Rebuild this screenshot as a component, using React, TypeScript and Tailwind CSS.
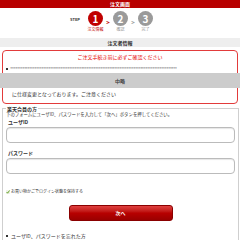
const font = { fontFamily: '"Noto Sans CJK JP", "Noto Sans", sans-serif' };

function Step({ n, label, active }: { n: number; label: string; active?: boolean }) {
  return (
    <div className="flex w-[15px] flex-col items-center">
      <div
        className={`flex h-[15px] w-[15px] items-center justify-center rounded-full text-[10px] font-bold leading-none text-white ${
          active ? "bg-[#c00000]" : "bg-[#9a9a9a]"
        }`}
      >
        {n}
      </div>
      <span
        className={`mt-[1px] whitespace-nowrap text-[4px] leading-[5px] ${
          active ? "text-[#c00000]" : "text-[#999]"
        }`}
      >
        {label}
      </span>
    </div>
  );
}

function Arrow({ active }: { active?: boolean }) {
  return (
    <div
      className={`flex h-[15px] w-[10px] items-end justify-center text-[6px] font-bold leading-none ${
        active ? "text-[#c00000]" : "text-[#999]"
      }`}
    >
      &gt;
    </div>
  );
}

export default function App() {
  return (
    <div className="h-[240px] w-[240px] overflow-hidden bg-white text-[#333]" style={font}>
      <div className="h-[8px] bg-[#b80000] text-center text-[5px] font-bold leading-[8px] text-white">
        注文画面
      </div>

      <div className="flex h-[30px] items-start pl-[70px] pt-[3px]">
        <div className="w-[18px] pt-[6px] text-[4px] font-bold leading-none">STEP</div>
        <Step n={1} label="注文情報" active />
        <Arrow active />
        <Step n={2} label="確認" />
        <Arrow />
        <Step n={3} label="完了" />
      </div>

      <div className="h-[9px] bg-[#eeeeee] text-center text-[5px] font-bold leading-[9px]">
        注文者情報
      </div>

      <div className="mx-[2px] mt-[3px] h-[54px] rounded-[4px] border border-[#e23b3b]">
        <div className="pt-[3px] text-center text-[5px] leading-[6px] text-[#e60000]">
          ご注文手続き前に必ずご確認ください
        </div>
        <div className="mt-[6px] flex items-center gap-[2px] overflow-hidden pl-[3px] pr-[6px] text-[5px] leading-[6px]">
          <span className="h-[2px] w-[2px] shrink-0 bg-[#333]" />
          <span className="whitespace-nowrap tracking-[-0.6px] text-[#888]">
            ************************************************************************************************
          </span>
        </div>
        <div className="-mx-[3px] mt-[1px] h-[15px] bg-[#cccccc] text-center text-[5px] font-bold leading-[15px] text-[#444]">
          中略
        </div>
        <div className="pt-[3px] pl-[9px] text-[5px] leading-[6px]">
          に仕様変更となっております。ご注意ください
        </div>
      </div>

      <fieldset className="mx-[2px] mt-[2px] h-[200px] border border-[#cfcfcf] px-[3px] pt-0">
        <legend className="px-[1px] text-[5px] font-bold leading-[5px]">楽天会員の方</legend>
        <p className="text-[4.4px] leading-[6px]">
          下のフォームにユーザID、パスワードを入力して「次へ」ボタンを押してください。
        </p>
        <div className="mt-[2px] pl-[2px] text-[5px] font-bold leading-[6px]">ユーザID</div>
        <div className="mt-[2px] h-[16px] w-[229px] rounded-[4px] border border-[#bbb] shadow-[inset_0_1px_1px_rgba(0,0,0,0.1)]" />
        <div className="mt-[7px] pl-[2px] text-[5px] font-bold leading-[6px]">パスワード</div>
        <div className="mt-[2px] h-[16px] w-[229px] rounded-[4px] border border-[#bbb] shadow-[inset_0_1px_1px_rgba(0,0,0,0.1)]" />
        <div className="mt-[15px] flex items-center gap-[1px] text-[4px] leading-[5px]">
          <svg width="4" height="4" viewBox="0 0 4 4">
            <rect x="0" y="0" width="4" height="4" fill="#eef3e6" />
            <path d="M0.6 2 L1.6 3.2 L3.5 0.5" stroke="#5a9a1a" strokeWidth="0.9" fill="none" />
          </svg>
          <span>お買い物かごでログイン状態を保持する</span>
        </div>
        <div className="mt-[11px] flex justify-center">
          <div className="flex h-[16px] w-[104px] items-center justify-center rounded-[3px] border border-[#8a0000] bg-gradient-to-b from-[#e04040] via-[#b80000] to-[#9a0000] text-[5px] font-bold text-white">
            次へ
          </div>
        </div>
        <div className="mt-[12px] flex items-center gap-[3px] text-[5px] leading-[6px]">
          <span className="h-[2px] w-[2px] bg-[#333]" />
          <span>ユーザID、パスワードを忘れた方</span>
        </div>
      </fieldset>
    </div>
  );
}
